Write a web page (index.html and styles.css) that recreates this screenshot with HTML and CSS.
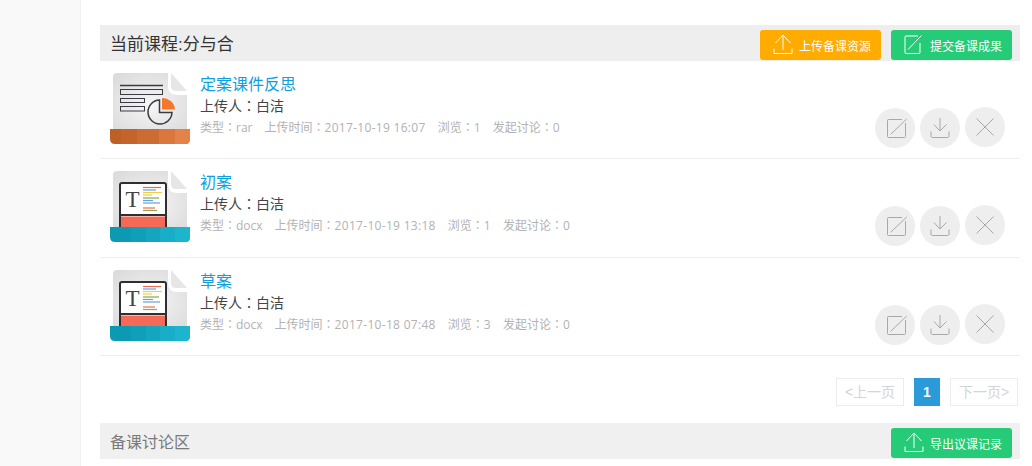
FILE: index.html
```html
<!DOCTYPE html>
<html>
<head>
  <meta charset="UTF-8" />
  <title>备课</title>
  <link rel="stylesheet" href="styles.css">
</head>
<body>

  <svg class="sprite" xmlns="http://www.w3.org/2000/svg">
    <defs>
      <radialGradient id="sheet" cx="50%" cy="55%" r="65%">
        <stop offset="0" stop-color="#f6f6f6"/>
        <stop offset="1" stop-color="#dcdcdc"/>
      </radialGradient>
    </defs>
    <symbol id="i-upload" viewBox="0 0 20 20">
      <path d="M1 14.500V19.500H19V14.500M10 16V1L2.500 9M10 1L17.500 9" fill="none" stroke="currentColor"/>
    </symbol>
    <symbol id="i-edit" viewBox="0 0 20 20">
      <path d="M16 9V18.500Q16 19.500 15 19.500H2Q1 19.500 1 18.500V3Q1 2 2 2H14M4 15.500L17.500 1.500" fill="none" stroke="currentColor"/>
    </symbol>
    <symbol id="i-edit-lg" viewBox="0 0 24 24">
      <path d="M22.500 7V20.500Q22.500 21.500 21.500 21.500H5.500Q4.500 21.500 4.500 20.500V4.500Q4.500 3.500 5.500 3.500H19M7.700 18.300L23.700 3" fill="none" stroke="currentColor"/>
    </symbol>
    <symbol id="i-down" viewBox="0 0 20 20">
      <path d="M1 13.500V18Q1 19.500 2.500 19.500H17.500Q19 19.500 19 18V13.500M10 0V13L4 6.500M10 13L16.500 6.500" fill="none" stroke="currentColor"/>
    </symbol>
    <symbol id="i-close" viewBox="0 0 20 20">
      <path d="M1.500 1.500L18.500 18.500M18.500 1.500L1.500 18.500" fill="none" stroke="currentColor"/>
    </symbol>
    <symbol id="sheet-base" viewBox="0 0 80 71">
      <path d="M7 0H58V13Q58 22 67 22H77V58H3V4Q3 0 7 0Z" fill="url(#sheet)"/>
      <path d="M61 0L77 18H66Q61 18 61 13Z" fill="#e6e6e6"/>
    </symbol>
  </svg>

  <aside class="sidebar"></aside>

  <main class="main">
    <section>
      <div class="bar">
        <h2 class="bar-title">当前课程:分与合</h2>
        <a class="btn btn-orange" href="#"><svg class="btn-icon"><use href="#i-upload"/></svg>上传备课资源</a>
        <a class="btn btn-green" href="#"><svg class="btn-icon"><use href="#i-edit"/></svg>提交备课成果</a>
      </div>

      <div class="item">
        <svg class="doc" viewBox="0 0 80 71">
          <use href="#sheet-base" width="80" height="71"/>
          <path d="M10 12.500H53" stroke="#3b3b44" stroke-width="1.500"/>
          <g fill="none" stroke="#3b3b44">
            <rect x="10.500" y="16.500" width="42" height="5"/>
            <rect x="10.500" y="25.500" width="24" height="4"/>
            <rect x="10.500" y="33.500" width="24" height="4.500"/>
            <path d="M49.500 27A12 12 0 1 0 62 39.500H49.500Z" stroke-width="1.500"/>
          </g>
          <path d="M52 25A13 12 0 0 1 65 36.500H52Z" fill="#f4772b"/>
          <path d="M0 56H80V66Q80 71 75 71H5Q0 71 0 66Z" fill="#bd5f27"/>
          <path d="M11 56H27V71H11Z" fill="#c4642b"/>
          <path d="M27 56H49V71H27Z" fill="#cc6c33"/>
          <path d="M49 56H65V71H49Z" fill="#d9773c"/>
          <path d="M65 56H80V66Q80 71 75 71H65Z" fill="#e4824a"/>
        </svg>
        <div class="info">
          <a class="name" href="#">定案课件反思</a>
          <p class="owner">上传人：白洁</p>
          <p class="meta"><span class="part">类型：rar</span><span class="part">上传时间：<span class="num">2017-10-19 16:07</span></span><span class="part">浏览：<span class="num">1</span></span><span class="part">发起讨论：<span class="num">0</span></span></p>
        </div>
        <div class="actions">
          <a class="act" href="#"><svg class="act-icon act-icon-lg"><use href="#i-edit-lg"/></svg></a>
          <a class="act" href="#"><svg class="act-icon"><use href="#i-down"/></svg></a>
          <a class="act act-del" href="#"><svg class="act-icon"><use href="#i-close"/></svg></a>
        </div>
      </div>

      <div class="item">
        <svg class="doc" viewBox="0 0 80 71">
          <use href="#sheet-base" width="80" height="71"/>
          <rect x="10" y="12" width="46" height="46" rx="2" fill="#fff" stroke="#2f2f33" stroke-width="2"/>
          <path d="M11 45.500H55V57H11Z" fill="#f46a56"/>
          <path d="M10 44H56" stroke="#2f2f33" stroke-width="2"/>
          <text class="doc-t" x="22.500" y="36" text-anchor="middle">T</text>
          <g stroke-width="1.200">
            <path d="M33 16.500H51" stroke="#ee6a4e"/>
            <path d="M33 19H46" stroke="#5aa7e0"/>
            <path d="M33 21.500H52" stroke="#f6cd3c"/>
            <path d="M33 24H42" stroke="#f6cd3c"/>
            <path d="M33 27H49" stroke="#8aa84e"/>
            <path d="M33 29.500H43" stroke="#5aa7e0"/>
            <path d="M33 32H50" stroke="#6b9ed8"/>
            <path d="M33 37H45" stroke="#ee6a4e"/>
            <path d="M33 39.500H47" stroke="#8aa84e"/>
          </g>
          <path d="M0 56H80V66Q80 71 75 71H5Q0 71 0 66Z" fill="#0b9ab2"/>
          <path d="M21 56H36V71H21Z" fill="#0f9fb8"/>
          <path d="M36 56H50V71H36Z" fill="#14a6bf"/>
          <path d="M50 56H65V71H50Z" fill="#18aec7"/>
          <path d="M65 56H80V66Q80 71 75 71H65Z" fill="#1db5cd"/>
        </svg>
        <div class="info">
          <a class="name" href="#">初案</a>
          <p class="owner">上传人：白洁</p>
          <p class="meta"><span class="part">类型：docx</span><span class="part">上传时间：<span class="num">2017-10-19 13:18</span></span><span class="part">浏览：<span class="num">1</span></span><span class="part">发起讨论：<span class="num">0</span></span></p>
        </div>
        <div class="actions">
          <a class="act" href="#"><svg class="act-icon act-icon-lg"><use href="#i-edit-lg"/></svg></a>
          <a class="act" href="#"><svg class="act-icon"><use href="#i-down"/></svg></a>
          <a class="act act-del" href="#"><svg class="act-icon"><use href="#i-close"/></svg></a>
        </div>
      </div>

      <div class="item">
        <svg class="doc" viewBox="0 0 80 71">
          <use href="#sheet-base" width="80" height="71"/>
          <rect x="10" y="12" width="46" height="46" rx="2" fill="#fff" stroke="#2f2f33" stroke-width="2"/>
          <path d="M11 45.500H55V57H11Z" fill="#f46a56"/>
          <path d="M10 44H56" stroke="#2f2f33" stroke-width="2"/>
          <text class="doc-t" x="22.500" y="36" text-anchor="middle">T</text>
          <g stroke-width="1.200">
            <path d="M33 16.500H51" stroke="#ee6a4e"/>
            <path d="M33 19H46" stroke="#5aa7e0"/>
            <path d="M33 21.500H52" stroke="#f6cd3c"/>
            <path d="M33 24H42" stroke="#f6cd3c"/>
            <path d="M33 27H49" stroke="#8aa84e"/>
            <path d="M33 29.500H43" stroke="#5aa7e0"/>
            <path d="M33 32H50" stroke="#6b9ed8"/>
            <path d="M33 37H45" stroke="#ee6a4e"/>
            <path d="M33 39.500H47" stroke="#8aa84e"/>
          </g>
          <path d="M0 56H80V66Q80 71 75 71H5Q0 71 0 66Z" fill="#0b9ab2"/>
          <path d="M21 56H36V71H21Z" fill="#0f9fb8"/>
          <path d="M36 56H50V71H36Z" fill="#14a6bf"/>
          <path d="M50 56H65V71H50Z" fill="#18aec7"/>
          <path d="M65 56H80V66Q80 71 75 71H65Z" fill="#1db5cd"/>
        </svg>
        <div class="info">
          <a class="name" href="#">草案</a>
          <p class="owner">上传人：白洁</p>
          <p class="meta"><span class="part">类型：docx</span><span class="part">上传时间：<span class="num">2017-10-18 07:48</span></span><span class="part">浏览：<span class="num">3</span></span><span class="part">发起讨论：<span class="num">0</span></span></p>
        </div>
        <div class="actions">
          <a class="act" href="#"><svg class="act-icon act-icon-lg"><use href="#i-edit-lg"/></svg></a>
          <a class="act" href="#"><svg class="act-icon"><use href="#i-down"/></svg></a>
          <a class="act act-del" href="#"><svg class="act-icon"><use href="#i-close"/></svg></a>
        </div>
      </div>

      <div class="pager">
        <a class="page" href="#">&lt;上一页</a>
        <a class="page page-on" href="#">1</a>
        <a class="page" href="#">下一页&gt;</a>
      </div>
    </section>

    <section>
      <div class="bar bar-light">
        <h2 class="bar-title bar-title-gray">备课讨论区</h2>
        <a class="btn btn-green" href="#"><svg class="btn-icon"><use href="#i-upload"/></svg>导出议课记录</a>
      </div>
    </section>
  </main>

</body>
</html>
```

FILE: styles.css
```css
html, body {
  height: 100%;
}
body {
  margin: 0;
  display: flex;
  background: #fff;
  color: #444;
  font-family: "Liberation Sans", "Noto Sans CJK SC", sans-serif;
  overflow: hidden;
}
a {
  text-decoration: none;
}
p, h2 {
  margin: 0;
  font-weight: normal;
}
.sprite {
  display: block;
  width: 0;
  height: 0;
}
.sidebar {
  width: 80px;
  flex: none;
  background: #f9f9f9;
  border-right: 1px solid #f1f1f1;
}
.main {
  width: 920px;
  margin-left: 19px;
  padding-top: 25px;
}
.bar {
  height: 36px;
  display: flex;
  align-items: flex-end;
  gap: 10px;
  padding: 0 8px 1px 10px;
  box-sizing: border-box;
  background: #eee;
}
.bar-light {
  background: #f0f0f0;
}
.bar-title {
  flex: 1;
  align-self: center;
  font-size: 17px;
  color: #333;
}
.bar-title-gray {
  font-size: 16px;
  color: #7a7a7a;
}
.btn {
  width: 121px;
  height: 30px;
  box-sizing: border-box;
  display: flex;
  align-items: center;
  gap: 6px;
  padding-left: 13px;
  border-radius: 3px;
  color: #fff;
  font-size: 12px;
}
.btn-orange {
  background: #ffab00;
}
.btn-green {
  background: #25cb76;
}
.btn-icon {
  width: 20px;
  height: 20px;
  margin-top: -2px;
  flex: none;
}
.item {
  height: 98.4px;
  box-sizing: border-box;
  display: flex;
  align-items: flex-start;
  padding: 12px 15px 0 10px;
  border-bottom: 1px solid #eee;
}
.doc {
  width: 80px;
  height: 71px;
  flex: none;
}
.doc-t {
  font-family: "Liberation Serif", serif;
  font-size: 23px;
  fill: #444;
}
.info {
  flex: 1;
  margin-left: 10px;
  line-height: 22px;
}
.name {
  display: block;
  padding-top: 1px;
  font-size: 16px;
  color: #0ea0de;
}
.owner {
  margin-top: -1px;
  font-size: 14px;
  color: #444;
  font-family: "Liberation Sans", "Noto Sans CJK TC", sans-serif;
}
.meta {
  font-size: 12px;
  color: #b2b2b2;
  font-family: "Open Sans", "Noto Sans CJK TC", sans-serif;
}
.part {
  margin-right: 12px;
}
.num {
  letter-spacing: 0.3px;
}
.actions {
  display: flex;
  gap: 5px;
  margin-top: 35px;
}
.act {
  width: 40px;
  height: 40px;
  display: flex;
  align-items: center;
  justify-content: center;
  border-radius: 50%;
  background: #eee;
  color: #a8a8a8;
}
.act-del {
  margin-top: -1px;
}
.act-icon {
  width: 20px;
  height: 20px;
}
.act-icon-lg {
  width: 24px;
  height: 24px;
}
.pager {
  display: flex;
  justify-content: flex-end;
  gap: 10px;
  margin: 22px 2px 17px 0;
}
.page {
  min-width: 66px;
  height: 26px;
  line-height: 26px;
  text-align: center;
  border: 1px solid #ececec;
  color: #d4d4d4;
  font-size: 14px;
}
.page-on {
  min-width: 26px;
  height: 28px;
  line-height: 28px;
  border: 0;
  background: #2a9bd8;
  color: #fff;
  font-weight: bold;
}
```
